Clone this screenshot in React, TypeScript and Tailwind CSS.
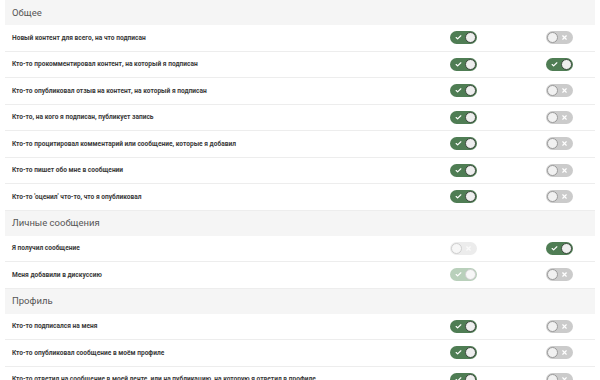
import { Check, X } from "lucide-react";

type State = "on" | "off" | "on-disabled" | "off-disabled";

type Row = { label: string; a: State; b: State };
type Section = { title: string; rows: Row[] };

const sections: Section[] = [
  {
    title: "Общее",
    rows: [
      { label: "Новый контент для всего, на что подписан", a: "on", b: "off" },
      { label: "Кто-то прокомментировал контент, на который я подписан", a: "on", b: "on" },
      { label: "Кто-то опубликовал отзыв на контент, на который я подписан", a: "on", b: "off" },
      { label: "Кто-то, на кого я подписан, публикует запись", a: "on", b: "off" },
      { label: "Кто-то процитировал комментарий или сообщение, которые я добавил", a: "on", b: "off" },
      { label: "Кто-то пишет обо мне в сообщении", a: "on", b: "off" },
      { label: "Кто-то 'оценил' что-то, что я опубликовал", a: "on", b: "off" },
    ],
  },
  {
    title: "Личные сообщения",
    rows: [
      { label: "Я получил сообщение", a: "off-disabled", b: "on" },
      { label: "Меня добавили в дискуссию", a: "on-disabled", b: "off" },
    ],
  },
  {
    title: "Профиль",
    rows: [
      { label: "Кто-то подписался на меня", a: "on", b: "off" },
      { label: "Кто-то опубликовал сообщение в моём профиле", a: "on", b: "off" },
      {
        label: "Кто-то ответил на сообщение в моей ленте, или на публикацию, на которую я ответил в профиле",
        a: "on",
        b: "off",
      },
    ],
  },
];

function Toggle({ state }: { state: State }) {
  const on = state === "on" || state === "on-disabled";
  const track =
    state === "on"
      ? "bg-[#4f7d54]"
      : state === "on-disabled"
        ? "bg-[#b9d0bb]"
        : state === "off"
          ? "bg-[#cbcbcb]"
          : "bg-[#ececec]";
  const knob =
    state === "on"
      ? "border-[#3d4a3e] bg-[#eeeeee]"
      : state === "off"
        ? "border-[#9a9a9a] bg-[#f1f1f1]"
        : "border-[#cfcfcf] bg-[#f7f7f7]";
  const glyph = state === "off-disabled" ? "text-[#fafafa]" : "text-white";
  return (
    <div className={`relative h-[13px] w-[27px] rounded-full ${track}`}>
      {on ? (
        <Check className={`absolute left-[5px] top-[3px] h-[7px] w-[7px] ${glyph}`} strokeWidth={4} />
      ) : (
        <X className={`absolute right-[5px] top-[3px] h-[7px] w-[7px] ${glyph}`} strokeWidth={4} />
      )}
      <div
        className={`absolute top-[1px] h-[11px] w-[11px] rounded-full border ${knob} ${
          on ? "right-[1px]" : "left-[1px]"
        }`}
      />
    </div>
  );
}

export default function App() {
  return (
    <div className="h-[380px] w-[600px] overflow-hidden bg-white px-[5px] font-['Roboto',sans-serif]">
      {sections.map((s) => (
        <div key={s.title}>
          <div className="flex h-[25px] items-center bg-[#f5f5f5] px-[7px] pt-[1px] text-[9.5px] text-[#555]">
            {s.title}
          </div>
          {s.rows.map((r) => (
            <div
              key={r.label}
              className="grid h-[26.5px] grid-cols-[1fr_122px_71px] items-center border-b-[1.5px] border-[#ededed]"
            >
              <div className="truncate pl-[7px] pt-[2px] text-[6.6px] font-bold text-[#3a3a3a]">{r.label}</div>
              <div className="flex justify-center">
                <Toggle state={r.a} />
              </div>
              <div className="flex justify-center">
                <Toggle state={r.b} />
              </div>
            </div>
          ))}
        </div>
      ))}
    </div>
  );
}
